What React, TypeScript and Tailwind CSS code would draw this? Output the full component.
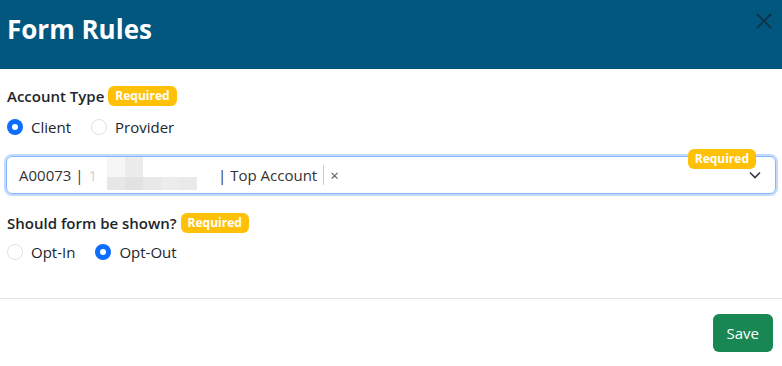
import React from "react";

function Badge({ children }: { children: React.ReactNode }) {
  return (
    <span className="inline-flex h-[20px] items-center rounded-[6px] bg-[#ffc107] px-[7px] text-[12px] font-bold leading-none text-white">
      {children}
    </span>
  );
}

function Radio({ checked, label }: { checked?: boolean; label: string }) {
  return (
    <label className="flex items-center gap-[8px]">
      {checked ? (
        <span className="flex h-[16px] w-[16px] items-center justify-center rounded-full bg-[#0d6efd]">
          <span className="h-[6px] w-[6px] rounded-full bg-white" />
        </span>
      ) : (
        <span className="h-[16px] w-[16px] rounded-full border border-[#dee2e6] bg-white" />
      )}
      <span className="text-[15px] text-[#212529]">{label}</span>
    </label>
  );
}

function Block({ top, bottom }: { top: string; bottom: string }) {
  return (
    <span className="flex w-[18px] flex-col">
      <span className="h-[20px]" style={{ background: top }} />
      <span className="h-[13px]" style={{ background: bottom }} />
    </span>
  );
}

export default function App() {
  return (
    <div
      className="h-[366px] w-[782px] bg-white"
      style={{ fontFamily: '"Open Sans", "Noto Sans", sans-serif' }}
    >
      <div className="flex h-[69px] items-start justify-between bg-[#02577e] pl-[7px] pr-[10px]">
        <h1 className="mt-[12px] text-[26px] font-bold leading-[34px] text-white">Form Rules</h1>
        <svg className="mt-[13px]" width="16" height="16" viewBox="0 0 16 16">
          <path d="M1 1L15 15M15 1L1 15" stroke="#0f3347" strokeWidth="1.8" />
        </svg>
      </div>
      <div className="px-[6px] pt-[16px]">
        <div className="flex items-center gap-[4px] pl-[1px]">
          <span className="text-[15px] font-semibold text-[#212529]">Account Type</span>
          <Badge>Required</Badge>
        </div>
        <div className="mt-[8px] flex items-center gap-[20px] pl-[1px]">
          <Radio checked label="Client" />
          <Radio label="Provider" />
        </div>
        <div className="relative mt-[18px]">
          <div className="flex h-[38px] items-center rounded-[6px] border border-[#86b7fe] pl-[12px] pr-[14px] shadow-[0_0_0_2px_#c4dafc]">
            <span className="text-[15px] text-[#333]">A00073 |</span>
            <span className="ml-[5px] text-[15px] text-[#cfcfcf]">1</span>
            <span className="ml-[10px] flex items-stretch self-start">
              <Block top="#f6f6f6" bottom="#e7e7e7" />
              <Block top="#ececec" bottom="#e2e2e2" />
              <Block top="#ffffff" bottom="#e8e8e8" />
              <Block top="#ffffff" bottom="#ececec" />
              <Block top="#ffffff" bottom="#eaeaea" />
              <span className="w-[21px]" />
            </span>
            <span className="text-[15px] text-[#333]">| Top Account</span>
            <span className="ml-[6px] h-[20px] w-px bg-[#ccc]" />
            <span className="ml-[6px] text-[15px] text-[#555]">×</span>
            <span className="flex-1" />
            <svg width="12" height="8" viewBox="0 0 12 8">
              <path d="M1 1.5L6 6.5L11 1.5" fill="none" stroke="#343a40" strokeWidth="1.6" />
            </svg>
          </div>
          <div className="absolute right-[20px] top-[-11px]">
            <Badge>Required</Badge>
          </div>
        </div>
        <div className="mt-[18px] flex items-center gap-[4px] pl-[1px]">
          <span className="text-[15px] font-semibold text-[#212529]">Should form be shown?</span>
          <Badge>Required</Badge>
        </div>
        <div className="mt-[6px] flex items-center gap-[20px] pl-[1px]">
          <Radio label="Opt-In" />
          <Radio checked label="Opt-Out" />
        </div>
      </div>
      <div className="mt-[35px] border-t border-[#dee2e6]" />
      <div className="flex justify-end pr-[9px] pt-[15px]">
        <button className="h-[38px] rounded-[6px] bg-[#198754] px-[14px] text-[15px] text-white">
          Save
        </button>
      </div>
    </div>
  );
}
